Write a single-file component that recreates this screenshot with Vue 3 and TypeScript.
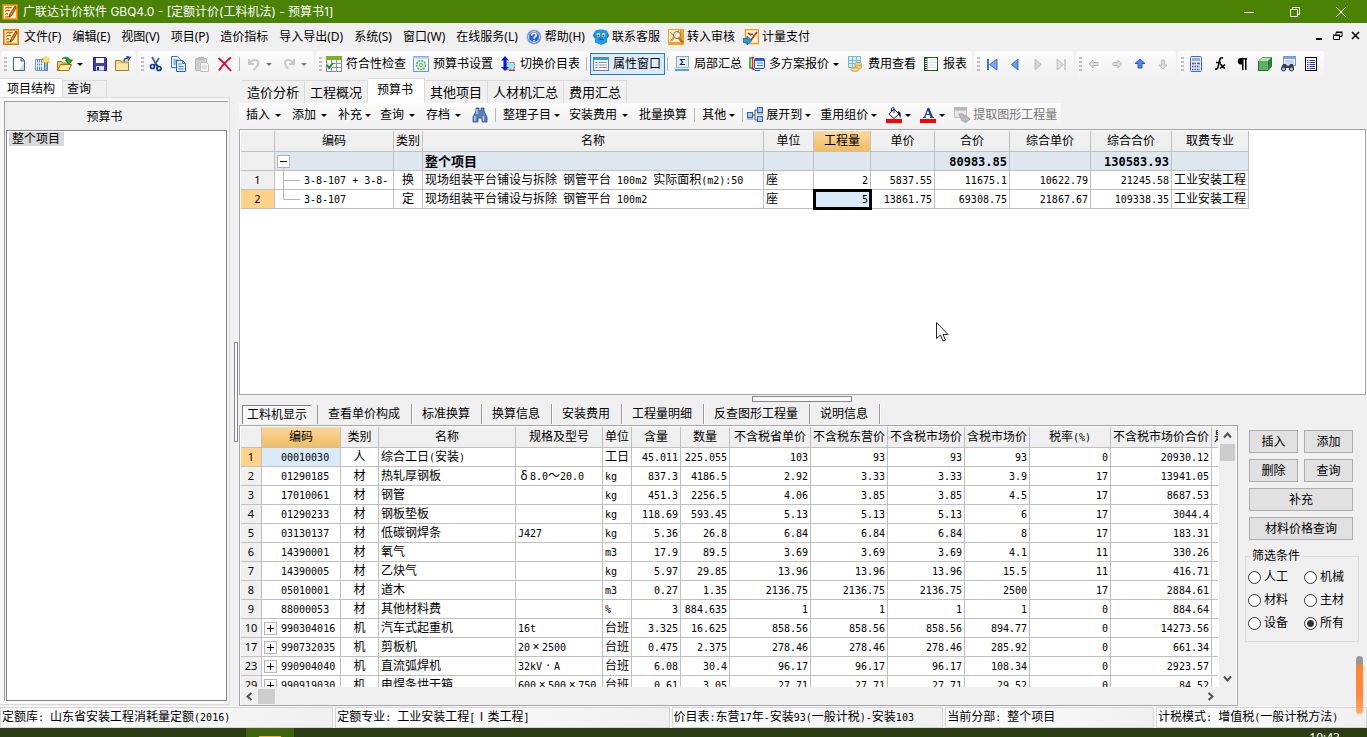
<script setup lang="ts">
import { h, ref } from 'vue'

/* ---------- helpers ---------- */
const runClass = (run: string) => /^[\x20-\x7e]/.test(run) ? 'lat' : /^[×·δ～Ⅰ]$/.test(run) ? 'wide' : ''
const Txt = (props: { t: string }) =>
  h('span', { class: 'txt' }, props.t.split(/([\x20-\x7e]+|[×·δ～Ⅰ])/).filter(Boolean).map((run) =>
    runClass(run) ? h('span', { class: runClass(run) }, run) : run))
Txt.props = ['t']

const shapes: Record<string, string> = {
  logo: '<rect width="16" height="16" fill="#e07a10"/><rect x="1.500" y="1.500" width="13" height="13" fill="#fff3cf" stroke="#f5a623"/><path d="M3 4.500l3-1.500 1 1 3-1M3 7.500l3-1.500 1 1 1-.5M3 10.500l2-1 1 1M3 13c3-.5 4 .5 6-1" stroke="#b5651d" stroke-width="1.200" fill="none"/><path d="M13 2L8 10l-1 3 3-2 4-7z" fill="#e58a1c" stroke="#8a3d05"/>',
  doc: '<path d="M2.500 1.500h8l3 3v10h-11z" fill="#fff" stroke="#44607f"/><path d="M10 1.500v3.500h3.500" fill="#bcd0e8" stroke="#44607f"/><path d="M8 14h5V7z" fill="#c9dcf2"/>',
  build: '<path d="M1.500 3.500h9v11h-9z" fill="#dbe9fa" stroke="#7f97b5"/><path d="M10.500 6h3v8.500h-3z" fill="#8fb4e2" stroke="#557eb5"/><path d="M3.500 4v10M5.500 4v10M7.500 4v10" stroke="#5b87c5"/><path d="M2 7h8M2 10h8" stroke="#fff"/><path d="M12 0l1 2.500 3-.5-2 2 2 2.500-3-.5-1 2-1-2-3 .5 2-2.500-2-2 3 .5z" fill="#ffe26a" stroke="#e5b722" stroke-width=".5"/>',
  open: '<path d="M.5 14.500v-9h4l1 1.500h6v2" fill="#f0d070" stroke="#9a7416"/><path d="M.5 14.500l3-6h11l-3 6z" fill="#fbe9a4" stroke="#9a7416"/><path d="M5 3c3-3 7-2 8 1h2.500L12 8.500 8.500 4H10C9 2 7 2 5 3z" fill="#23a523" stroke="#0b6a0b" stroke-width=".7"/>',
  save: '<path d="M1.500 1.500h12l1 1v12h-13z" fill="#4040a8" stroke="#26267a"/><path d="M4 2h8v5H4z" fill="#f5f5ff"/><path d="M4 10h8v4.500H4z" fill="#dfe3ea"/><path d="M5 11h2v3H5z" fill="#26267a"/>',
  folder: '<path d="M.5 14.500v-10h5l1 1.500h7v8.500z" fill="#f3d481" stroke="#a67d22"/><path d="M1 8h12v6H1z" fill="#fbe7ac"/><path d="M9 5.500c0-3 2-3.500 4-3.500M11.500.5L15 1.500 13 4.500" fill="none" stroke="#24508f" stroke-width="1.500"/>',
  cut: '<path d="M4 1l5 9M11 2L6 10" stroke="#3a5a80" stroke-width="1.600"/><circle cx="4.500" cy="10.500" r="2" fill="none" stroke="#0c3aa0" stroke-width="1.700"/><circle cx="11" cy="12.500" r="2" fill="none" stroke="#0c3aa0" stroke-width="1.700"/><path d="M8 8.500l2 2" stroke="#0c3aa0" stroke-width="2"/>',
  copy: '<path d="M.5.500h6l3 3v8h-9z" fill="#eaf3ff" stroke="#3478cc"/><path d="M2.500 4h4M2.500 6h4M2.500 8h4" stroke="#3478cc"/><path d="M5.500 4.500h6l3 3v8h-9z" fill="#eaf3ff" stroke="#2263b8"/><path d="M11.500 4.500v3h3M7.500 8h3M7.500 10.500h5M7.500 13h5" fill="none" stroke="#3478cc"/>',
  paste: '<rect x="1.500" y="2.500" width="11" height="12" rx="1" fill="#d0d0d0" stroke="#b0b0b0"/><rect x="4" y="1" width="6" height="3" fill="#bcbcbc"/><path d="M6.500 6.500h6l2 2v7h-8z" fill="#f3f3f3" stroke="#bdbdbd"/><path d="M8 10h5M8 12h5" stroke="#c8c8c8"/>',
  del: '<path d="M1.500 2C5 5 10 10 14 15M14 1.500C9 5 5 10 2 14.500" fill="none" stroke="#cf1531" stroke-width="2"/>',
  undo: '<path d="M3 3v5h5M4 7c2-4 8-4 8.500 0 0 3-2 4-5 7" fill="none" stroke="#c9c9c9" stroke-width="2"/>',
  redo: '<path d="M13 3v5H8M12 7C10 3 4 3 4 7c0 3 2 3 3 6" fill="none" stroke="#c9c9c9" stroke-width="2"/>',
  check: '<rect x=".5" y=".5" width="15" height="15" fill="#fff" stroke="#7b8794"/><rect width="16" height="4" fill="#74b51c"/><path d="M5.500 4v12M10.500 4v12M0 7.500h16M0 11.500h16" stroke="#8d99a5"/><path d="M1 7h5v5H1z" fill="#dff3d3"/><path d="M1 9l2 3 4-5" fill="none" stroke="#178a17" stroke-width="1.800"/>',
  gear: '<rect x=".5" y=".5" width="15" height="15" fill="#eef6fb" stroke="#6b9cc4"/><path d="M0 1.500h16" stroke="#a6cbe6" stroke-width="2"/><circle cx="8" cy="9" r="4.500" fill="#d4ecd0" stroke="#5fa869" stroke-width="1.500" stroke-dasharray="2 1"/><circle cx="8" cy="9" r="1.500" fill="#fff" stroke="#5fa869"/>',
  swap: '<rect x="6.500" y="6.500" width="8" height="7" fill="#8eeef2" stroke="#e05070" stroke-dasharray="2 1"/><path d="M5 0l4 4.500H6.500V11H9l-4 4-4-4h2.500V4.500H1z" fill="#1018d8"/><path d="M9 14.500h6" stroke="#c03050"/>',
  prop: '<rect x=".5" y="1.500" width="15" height="13" fill="#f6f8fa" stroke="#69808f"/><path d="M1 3h14" stroke="#2fa5c5" stroke-width="2"/><path d="M2.500 6.500h2M2.500 9h2M2.500 11.500h2" stroke="#3f8b3f"/><path d="M6 6.500h8M6 9h8M6 11.500h8" stroke="#8b97a1"/>',
  sigma: '<rect x="2.500" y=".5" width="12" height="11" fill="#e0f1fb" stroke="#88a9bc"/><path d="M11 3.500H6.500l2 2.500-2 2.500H11" fill="none" stroke="#1d2b3a" stroke-width="1.200"/><path d="M1 14h14" stroke="#5aa9b8" stroke-width="2"/><path d="M0 12h16" stroke="#c2d3da"/>',
  multi: '<path d="M3 2H1v10h2" fill="none" stroke="#1fa52f" stroke-width="1.600"/><path d="M5 1.500H3.500V13H5" fill="none" stroke="#e22" stroke-width="1.400"/><rect x="5.500" y="2.500" width="10" height="10" rx="1" fill="#e4f0ff" stroke="#1e50b8"/><path d="M6 4h9" stroke="#2d66d8" stroke-width="2"/><path d="M8 7h6M8 9.500h6" stroke="#4f83d8"/><path d="M4 12.500l2 2h5" stroke="#1e50b8" fill="none"/>',
  fee: '<rect x=".5" y=".5" width="12" height="11" fill="#d5effa" stroke="#82b8ce"/><path d="M4.500 1v10M8.500 1v10M1 4.500h11M1 7.500h11" stroke="#77bdd8"/><path d="M6.500 8v3c0 2 7 2 7 0V8z" fill="#e9c06c"/><ellipse cx="10" cy="8" rx="3.500" ry="1.500" fill="#f7d98a" stroke="#c9a050"/><ellipse cx="10.500" cy="11" rx="3.500" ry="1.500" fill="#f7d98a" stroke="#c9a050"/><ellipse cx="7" cy="13.500" rx="4" ry="1.800" fill="#f7d98a" stroke="#c9a050"/>',
  report: '<rect x="1.500" y="1.500" width="13" height="13" fill="#fff" stroke="#1c5f1c"/><path d="M3 2v13" stroke="#333" stroke-dasharray="1 1" stroke-width="2"/><path d="M6 4h7M6 6.500h7M6 9h7M6 11.500h7" stroke="#d2d8e0"/><path d="M4.500 2v12" stroke="#bbb"/>',
  first: '<path d="M4 3v11" stroke="#3f6fd0" stroke-width="2"/><path d="M13 3v11L5.500 8.500z" fill="#7ba6f0" stroke="#3f6fd0"/>',
  prev: '<path d="M11 3v11L4.500 8.500z" fill="#6b98ea" stroke="#3f6fd0"/>',
  next: '<path d="M5 3v11l6.500-5.500z" fill="#d4d4d4" stroke="#c2c2c2"/>',
  last: '<path d="M4 3v11l6.500-5.500z" fill="#dedede" stroke="#c2c2c2"/><path d="M12 3v11" stroke="#c2c2c2" stroke-width="1.500"/>',
  aleft: '<path d="M3 8l4-4v2.500h5v3H7V12z" fill="#dcdcdc" stroke="#bdbdbd"/>',
  aright: '<path d="M13 8L9 4v2.500H4v3h5V12z" fill="#dcdcdc" stroke="#bdbdbd"/>',
  aup: '<path d="M8 3l5 4.500h-3V12H6V7.500H3z" fill="#4f86ee" stroke="#2458c0"/>',
  adown: '<path d="M8 13l4-4h-2.500V4h-3v5H4z" fill="#dcdcdc" stroke="#bdbdbd"/>',
  calc: '<rect x="2.500" y=".5" width="11" height="15" rx="1" fill="#dfe9fb" stroke="#4c6fa8"/><rect x="4" y="2" width="8" height="3" fill="#8fb1e6"/><path d="M4 7.500h8M4 10.500h8M4 13.500h8" stroke="#3b62b0" stroke-width="1.500" stroke-dasharray="1.500 1"/><path d="M4 7.500h2M10 7.500h2" stroke="#d33" stroke-width="1.500"/>',
  fx: '<path d="M12 2c-3-1-3 1-4 5s-1 7-4 6M5 6.500h5M9 8.500c2-1 2 4 5 3.500M14 8.500l-5 4" fill="none" stroke="#000" stroke-width="1.600"/>',
  para: '<path d="M13 2H7a3.200 3.200 0 000 6.500h1V14h1.500V3.500H11V14h1.500V3.500H13z" fill="#000"/>',
  cube: '<path d="M1.500 5l4-3.500h9v9L11 14.500H1.500z" fill="#5fae62" stroke="#2b6b31"/><path d="M1.500 5l4-3.500h9L11 5z" fill="#b4e0b2"/><path d="M11 5l3.500-3.500v9L11 14.500z" fill="#2f7f38"/>',
  find: '<rect x="3.500" y=".5" width="12" height="9" fill="#e6efff" stroke="#7c97c4"/><path d="M4 2h11" stroke="#7fa8ea" stroke-width="2"/><path d="M5.500 5h8M5.500 7h8" stroke="#a7b8d3"/><path d="M3 8h3l1 2h2l1-2h3l1 4v2H9v-2H6v2H1v-2z" fill="#34425c"/><circle cx="3.500" cy="13" r="2" fill="#a9c7f3" stroke="#222e44"/><circle cx="11.500" cy="13" r="2" fill="#a9c7f3" stroke="#222e44"/>',
  list: '<rect x="2.500" y="1.500" width="11" height="13" fill="#fff" stroke="#000"/><path d="M4 4.500h1.500M4 6.500h1.500M4 8.500h1.500M4 10.500h1.500M4 12.500h1.500M6.500 4.500H12M6.500 6.500H12M6.500 8.500H12M6.500 10.500H12M6.500 12.500H12" stroke="#2436a8"/>',
  help: '<circle cx="8" cy="8" r="7" fill="#2d66cf" stroke="#9fb6dd"/><circle cx="8" cy="8" r="5.500" fill="none" stroke="#fff" stroke-width=".8"/><path d="M5.800 6.500c0-3 4.400-3 4.400-.2 0 1.700-2.200 1.500-2.200 3.200M8 11v1.500" fill="none" stroke="#fff" stroke-width="1.600"/>',
  service: '<path d="M2 2c2-2 10-2 12 0 2 3 2 6 0 8v3.500L8 16l-6-2.500V10C0 8 0 5 2 2z" fill="#2199e0"/><path d="M1 4l-1 3 2 2zM15 4l1 3-2 2z" fill="#0d6bb5"/><ellipse cx="5.500" cy="6" rx="1.600" ry="2" fill="#fff"/><ellipse cx="10.500" cy="6" rx="1.600" ry="2" fill="#fff"/><circle cx="5.500" cy="6.500" r=".9" fill="#000"/><circle cx="10.500" cy="6.500" r=".9" fill="#000"/><path d="M6 10q2 1.500 4 0" stroke="#0b4a82" fill="none"/>',
  audit: '<rect width="16" height="16" fill="#f1a329"/><path d="M1 1h11v12H1z" fill="#fdeec2"/><path d="M2 3l4 4-4 6M11 1L4 12" stroke="#b88a4b" fill="none"/><circle cx="9" cy="6" r="3.500" fill="#fff9" stroke="#8a6b3a"/><path d="M11 9l4 5" stroke="#d26c0b" stroke-width="2.500"/>',
  pay: '<rect x="2.500" y=".5" width="13" height="14" fill="#fff4d4" stroke="#f39a1e" stroke-width="1.500"/><path d="M14 3L8 11M5 4l3 2M10 5l-3 1" stroke="#b03a10" stroke-width="1.800"/><path d="M0 9.500h4V7l5 4.500L4 16v-2.500H0z" fill="#239be0" stroke="#0b5d94" stroke-width=".7"/>',
  binoc: '<path d="M4 1h3v3h2V1h3v3l3 6v5h-5v-4H6v4H1v-5l3-6z" fill="#5c80ba" stroke="#2f4f85" stroke-width=".8"/><path d="M3 9v5M11.500 9v5M5 2v5" stroke="#c9dcf7" stroke-width="1.200"/>',
  expand: '<path d="M5 8h3M8 3v10M8 3h2M8 13h2" stroke="#37557f" fill="none"/><rect x=".5" y="5.500" width="5" height="5" fill="#a8c8f5" stroke="#37609f"/><rect x="10.500" y=".5" width="5" height="5" fill="#a8c8f5" stroke="#37609f"/><rect x="10.500" y="9.500" width="5" height="5" fill="#a8c8f5" stroke="#37609f"/><path d="M10 7h6M0 12h6" stroke="#6787b5"/>',
  fill: '<path d="M3 7l5-5 5 5-5 4.500z" fill="#fff" stroke="#111a55"/><path d="M8 6V1.500C8 0 5.500 0 5.500 2v3" fill="none" stroke="#111a55"/><path d="M12 4c3 1 3 3 2.500 7L12 7z" fill="#111a55"/><rect y="12" width="16" height="4" fill="#f00"/>',
  color: '<path d="M3 10.500h3M10 10.500h4M4.500 10.500L8 1.500M5.500 7.500h5" fill="none" stroke="#1f3f88" stroke-width="1.200"/><path d="M8 1l4 9.500" stroke="#1f3f88" stroke-width="2.200"/><rect y="12" width="16" height="4" fill="#f00"/>',
  extract: '<rect x=".5" y=".5" width="12" height="10" fill="#e5e5e5" stroke="#c0c0c0"/><path d="M0 2h13" stroke="#b5b5b5" stroke-width="3"/><path d="M5 7h4l2 3V8l5 4-5 4v-2H8z" fill="#bbb" stroke="#a5a5a5"/>',
}
const Icon = (props: { n: string }) =>
  h('svg', { class: 'icon', viewBox: '0 0 16 16', width: 16, height: 16, 'aria-hidden': 'true', innerHTML: shapes[props.n] })
Icon.props = ['n']

/* ---------- data ---------- */
interface Tool { i?: string; t?: string; d?: 0 | 1 | 2; sep?: 1 | 2; on?: boolean; off?: boolean; tip?: string }

const menus: Tool[] = [
  { t: '文件(F)' }, { t: '编辑(E)' }, { t: '视图(V)' }, { t: '项目(P)' }, { t: '造价指标' }, { t: '导入导出(D)' },
  { t: '系统(S)' }, { t: '窗口(W)' }, { t: '在线服务(L)' }, { i: 'help', t: '帮助(H)' }, { i: 'service', t: '联系客服' },
  { i: 'audit', t: '转入审核' }, { i: 'pay', t: '计量支付' },
]
const groups: Tool[][] = [
  [{ i: 'doc', tip: '新建' }, { i: 'build', tip: '新建项目' }, { i: 'open', d: 1, tip: '打开' }, { i: 'save', tip: '保存' }, { i: 'folder', tip: '另存' }],
  [{ i: 'cut', tip: '剪切' }, { i: 'copy', tip: '复制' }, { i: 'paste', tip: '粘贴' }, { i: 'del', tip: '删除' }, { sep: 1 },
    { i: 'undo', d: 1, off: true, tip: '撤销' }, { i: 'redo', d: 1, off: true, tip: '重做' }],
  [{ i: 'check', t: '符合性检查' }, { i: 'gear', t: '预算书设置' }, { i: 'swap', t: '切换价目表' }, { sep: 1 },
    { i: 'prop', t: '属性窗口', on: true }, { sep: 1 }, { i: 'sigma', t: '局部汇总' }, { i: 'multi', t: '多方案报价', d: 1 },
    { i: 'fee', t: '费用查看' }, { i: 'report', t: '报表' }],
  [{ i: 'first', tip: '首项' }, { i: 'prev', tip: '上一项' }, { i: 'next', tip: '下一项' }, { i: 'last', tip: '末项' }],
  [{ i: 'aleft', tip: '左移' }, { i: 'aright', tip: '右移' }, { i: 'aup', tip: '上移' }, { i: 'adown', tip: '下移' }],
  [{ i: 'calc', tip: '计算器' }, { i: 'fx', tip: '函数' }, { i: 'para', tip: '段落' }, { i: 'cube', tip: '图形' }, { i: 'find', tip: '查找' }, { i: 'list', tip: '列表' }],
]
const tools: Tool[] = [
  { t: '插入', d: 2 }, { t: '添加', d: 2 }, { t: '补充', d: 1 }, { t: '查询', d: 2 }, { t: '存档', d: 2 }, { i: 'binoc', tip: '查找' },
  { sep: 1 }, { t: '整理子目', d: 1 }, { t: '安装费用', d: 2 }, { t: '批量换算' }, { sep: 1 }, { t: '其他', d: 1 }, { sep: 2 },
  { i: 'expand', t: '展开到', d: 1 }, { t: '重用组价', d: 1 }, { i: 'fill', d: 1, tip: '填充色' }, { i: 'color', d: 1, tip: '字体色' },
  { i: 'extract', t: '提取图形工程量', off: true },
]
const mainTabs = ['造价分析', '工程概况', '预算书', '其他项目', '人材机汇总', '费用汇总']
const mainTab = ref('预算书')
const subTabs = ['工料机显示', '查看单价构成', '标准换算', '换算信息', '安装费用', '工程量明细', '反查图形工程量', '说明信息']
const subTab = ref('工料机显示')

const topCols = ['编码', '类别', '名称', '单位', '工程量', '单价', '合价', '综合单价', '综合合价', '取费专业']
const topRows = [
  { code: '3-8-107 + 3-8-', v: ['换', '现场组装平台铺设与拆除 钢管平台 100m2 实际面积(m2):50', '座', '2', '5837.55', '11675.1', '10622.79', '21245.58', '工业安装工程'] },
  { code: '3-8-107', v: ['定', '现场组装平台铺设与拆除 钢管平台 100m2', '座', '5', '13861.75', '69308.75', '21867.67', '109338.35', '工业安装工程'] },
]
const topAlign = ['c', 'l', 'l', 'r', 'r', 'r', 'r', 'r', 'l']

const resCols = ['编码', '类别', '名称', '规格及型号', '单位', '含量', '数量', '不含税省单价', '不含税东营价', '不含税市场价', '含税市场价', '税率(%)', '不含税市场价合价', '是']
const resAlign = ['c', 'l', 'l', 'l', 'r', 'r', 'r', 'r', 'r', 'r', 'r', 'r', 'l']
const resRows: string[][] = [
  '1|00010030|人|综合工日(安装)||工日|45.011|225.055|103|93|93|93|0|20930.12',
  '2|01290185|材|热轧厚钢板|δ8.0～20.0|kg|837.3|4186.5|2.92|3.33|3.33|3.9|17|13941.05',
  '3|17010061|材|钢管||kg|451.3|2256.5|4.06|3.85|3.85|4.5|17|8687.53',
  '4|01290233|材|钢板垫板||kg|118.69|593.45|5.13|5.13|5.13|6|17|3044.4',
  '5|03130137|材|低碳钢焊条|J427|kg|5.36|26.8|6.84|6.84|6.84|8|17|183.31',
  '6|14390001|材|氧气||m3|17.9|89.5|3.69|3.69|3.69|4.1|11|330.26',
  '7|14390005|材|乙炔气||kg|5.97|29.85|13.96|13.96|13.96|15.5|11|416.71',
  '8|05010001|材|道木||m3|0.27|1.35|2136.75|2136.75|2136.75|2500|17|2884.61',
  '9|88000053|材|其他材料费||%|3|884.635|1|1|1|1|0|884.64',
  '10|990304016|机|汽车式起重机|16t|台班|3.325|16.625|858.56|858.56|858.56|894.77|0|14273.56',
  '17|990732035|机|剪板机|20×2500|台班|0.475|2.375|278.46|278.46|278.46|285.92|0|661.34',
  '23|990904040|机|直流弧焊机|32kV·A|台班|6.08|30.4|96.17|96.17|96.17|108.34|0|2923.57',
  '29|990919030|机|电焊条烘干箱|600×500×750|台班|0.61|3.05|27.71|27.71|27.71|29.52|0|84.52',
].map((r) => (r + '|').split('|'))

const filters = ['人工', '机械', '材料', '主材', '设备', '所有']
const filter = ref('所有')
const status = ['定额库: 山东省安装工程消耗量定额(2016)', '定额专业: 工业安装工程[Ⅰ类工程]', '价目表:东营17年-安装93(一般计税)-安装103', '当前分部: 整个项目', '计税模式: 增值税(一般计税方法)']
</script>

<template>
  <div class="app">
    <header class="title">
      <Icon n="logo" />
      <h1>广联达计价软件 GBQ4.0 - [定额计价(工料机法) - 预算书1]</h1>
      <div class="winbtns">
        <button aria-label="最小化"><svg width="12" height="12"><path d="M1 6.500h10" stroke="#fff" /></svg></button>
        <button aria-label="还原"><svg width="12" height="12" fill="none" stroke="#fff"><path d="M1.500 3.500h7v7h-7zM3.500 3.500v-2h7v7h-2" /></svg></button>
        <button aria-label="关闭"><svg width="12" height="12" stroke="#fff"><path d="M1 1l10 10M11 1L1 11" /></svg></button>
      </div>
    </header>

    <nav class="menu">
      <Icon n="logo" />
      <button v-for="m in menus" :key="m.t" :class="{ pic: m.i }"><Icon v-if="m.i" :n="m.i" />{{ m.t }}</button>
      <div class="mdi">
        <button aria-label="最小化文档"><svg width="10" height="10"><path d="M1 8h6" stroke="#000" stroke-width="2" /></svg></button>
        <button aria-label="还原文档"><svg width="10" height="10" fill="none" stroke="#000"><path d="M.5 4.500h6v4h-6zM3 4V1.500h6v4H7M3 1h6.500M0 4h7" /></svg></button>
        <button aria-label="关闭文档"><svg width="10" height="10" stroke="#000" stroke-width="1.600"><path d="M1 1l7 7M8 1L1 8" /></svg></button>
      </div>
    </nav>

    <div class="bars">
      <div v-for="(g, gi) in groups" :key="gi" class="group">
        <i class="grip"></i>
        <template v-for="(b, bi) in g" :key="bi">
          <i v-if="b.sep" class="sep"></i>
          <button v-else class="tool" :class="{ on: b.on, off: b.off }" :aria-label="b.tip">
            <Icon v-if="b.i" :n="b.i" /><span v-if="b.t">{{ b.t }}</span><i v-if="b.d" class="arr"></i>
          </button>
        </template>
      </div>
    </div>

    <div class="body">
      <aside class="side">
        <div class="sidetabs"><button class="cur">项目结构</button><button>查询</button></div>
        <div class="sidepage">
          <div class="sidebox">
            <h2>预算书</h2>
            <ul class="tree"><li>整个项目</li></ul>
          </div>
        </div>
      </aside>
      <div class="vsplit"><i></i></div>

      <main class="main">
        <div class="maintabs">
          <button v-for="t in mainTabs" :key="t" :class="{ cur: t === mainTab }" @click="mainTab = t">{{ t }}</button>
        </div>
        <div class="subbar">
          <template v-for="(b, bi) in tools" :key="bi">
            <i v-if="b.sep" class="sep" :class="{ tight: b.sep === 2 }"></i>
            <button v-else class="tool" :class="{ off: b.off }" :aria-label="b.tip">
              <Icon v-if="b.i" :n="b.i" /><span v-if="b.t">{{ b.t }}</span><i v-if="b.d" class="arr" :class="{ long: b.d === 2 }"></i>
            </button>
          </template>
        </div>

        <section class="pane top">
          <table class="grid budget">
            <colgroup><col v-for="n in 11" :key="n" :class="'b' + n"></colgroup>
            <thead>
              <tr><th></th><th v-for="c in topCols" :key="c" :class="{ hot: c === '工程量' }">{{ c }}</th></tr>
            </thead>
            <tbody>
              <tr class="sum">
                <th></th>
                <td><div class="code"><svg class="branch" width="18" height="19"><rect x="2.500" y="3.500" width="12" height="12" fill="#fff" stroke="#b5b5b5" /><path d="M5 9.500h7" stroke="#000" /><path d="M8.500 16v3" stroke="#b5b5b5" /></svg></div></td>
                <td></td><td><Txt t="整个项目" /></td><td></td><td></td><td></td>
                <td class="r"><Txt t="80983.85" /></td><td></td><td class="r"><Txt t="130583.93" /></td><td></td>
              </tr>
              <tr v-for="(r, i) in topRows" :key="i">
                <th class="num" :class="{ hotnum: i === 1 }">{{ i + 1 }}</th>
                <td><div class="code"><svg class="branch" width="29" height="18"><path :d="i ? 'M8.500 0v9.500h17' : 'M8.500 0v18M8.500 9.500h17'" fill="none" stroke="#b5b5b5" /></svg><Txt :t="r.code" /></div></td>
                <td v-for="(v, j) in r.v" :key="j" :class="[topAlign[j], { sel: i === 1 && j === 3 }]"><Txt :t="v" /></td>
              </tr>
            </tbody>
          </table>
        </section>

        <div class="hsplit"><i></i></div>

        <div class="subtabs">
          <button v-for="t in subTabs" :key="t" :class="{ cur: t === subTab }" @click="subTab = t">{{ t }}</button>
        </div>

        <div class="lower">
          <section class="pane bottom">
            <div class="view">
              <table class="grid res">
                <colgroup><col v-for="n in 15" :key="n" :class="'r' + n"></colgroup>
                <thead>
                  <tr><th></th><th v-for="(c, i) in resCols" :key="c" :class="{ hot: i === 0 }"><Txt :t="c" /></th></tr>
                </thead>
                <tbody>
                  <tr v-for="(r, i) in resRows" :key="r[0]">
                    <th class="num" :class="{ hotnum: i === 0 }">{{ r[0] }}</th>
                    <td :class="{ pick: i === 0 }">
                      <div class="code res-code">
                        <button v-if="r[2] === '机'" class="plus" aria-label="展开"><svg width="11" height="11"><path d="M2 5.500h7M5.500 2v7" stroke="#000" /></svg></button>
                        <i v-else class="noplus"></i>
                        <Txt :t="r[1]" />
                      </div>
                    </td>
                    <td v-for="(v, j) in r.slice(2)" :key="j" :class="resAlign[j]"><Txt :t="v" /></td>
                  </tr>
                </tbody>
              </table>
            </div>
            <div class="vbar">
              <button aria-label="向上"><svg width="9" height="7"><path d="M1 5.500l3.500-4 3.500 4" fill="none" stroke="#505050" stroke-width="2" /></svg></button>
              <i class="vthumb"></i>
              <button class="end" aria-label="向下"><svg width="9" height="7"><path d="M1 1.500l3.500 4 3.500-4" fill="none" stroke="#505050" stroke-width="2" /></svg></button>
            </div>
            <div class="hbar">
              <button aria-label="向左"><svg width="7" height="9"><path d="M5.500 1l-4 3.500 4 3.500" fill="none" stroke="#505050" stroke-width="2" /></svg></button>
              <i class="hthumb"></i>
              <button class="end" aria-label="向右"><svg width="7" height="9"><path d="M1.500 1l4 3.500-4 3.500" fill="none" stroke="#505050" stroke-width="2" /></svg></button>
            </div>
          </section>

          <div class="actions">
            <div class="btns">
              <button>插入</button><button>添加</button><button>删除</button><button>查询</button>
              <button class="full">补充</button><button class="full">材料价格查询</button>
            </div>
            <fieldset>
              <legend>筛选条件</legend>
              <label v-for="f in filters" :key="f"><input v-model="filter" type="radio" name="filter" :value="f">{{ f }}</label>
            </fieldset>
          </div>
        </div>
      </main>
    </div>

    <footer class="status"><div v-for="s in status" :key="s"><Txt :t="s" /></div></footer>
    <div class="taskbar"><i class="task"><i></i></i><time>10:43</time></div>

    <i class="floatbar"></i>
    <svg class="cursor" width="13" height="20" viewBox="0 0 13 20"><path d="M.5.500v16l4-3.500 2.500 6 2.500-1-2.500-5.500h5z" fill="#fff" stroke="#222" /></svg>
  </div>
</template>

<style>
html, body { margin: 0; overflow: hidden; }
</style>

<style scoped>
.app {
  position: relative; display: flex; flex-direction: column; height: 100vh; overflow: hidden;
  background: #f0f0f0; color: #000;
  font: 12px/16px "Noto Sans", "Noto Sans CJK SC", sans-serif;
}
button { font: inherit; color: inherit; background: none; border: 0; padding: 0; margin: 0; white-space: nowrap; }
.app :deep(.icon) { display: block; flex: none; }
.app :deep(.txt) { white-space: pre; }
.app :deep(.lat) { font-family: "DejaVu Sans Mono", monospace; font-size: 10px; }
.app :deep(.wide) { display: inline-block; width: 12px; text-align: center; line-height: 14px; }

.title { display: flex; align-items: center; height: 23px; padding-left: 2px; background: #498205; color: #fff; gap: 5px; flex: none; }
.title h1 { margin: 0; font: 400 12px/16px "DejaVu Sans", "Noto Sans CJK SC", sans-serif; font-family: Inter, "Noto Sans CJK SC", sans-serif; flex: 1; white-space: nowrap; }
.winbtns { display: flex; padding-right: 3px; }
.winbtns button { width: 46px; height: 20px; display: grid; place-items: center; }

.menu { display: flex; align-items: center; height: 28px; padding-left: 3px; gap: 11px; flex: none; }
.menu > .icon { margin-right: -6px; }
.menu > button { display: flex; align-items: center; gap: 3px; }
.menu > .pic { margin-left: -3px; }
.mdi { margin-left: auto; display: flex; gap: 8px; padding-right: 6px; }

.bars { display: flex; gap: 2px; padding-left: 1px; flex: none; height: 26px; }
.group { display: flex; align-items: center; padding-right: 1px; background: linear-gradient(#fcfcfc, #f1f1f1); border-radius: 3px; }
.grip { width: 3px; height: 14px; margin: 0 1px 0 3px; background: repeating-linear-gradient(#bdbdbd 0 2px, transparent 2px 4px); }
.tool { display: flex; align-items: center; height: 22px; padding: 0 4px 0 3px; gap: 4px; }
.tool .arr { margin: 0 -1px 0 -3px; }
.tool.off { color: #777; }
.tool.on { background: #dcebf8; box-shadow: inset 0 0 0 1px #1a7fd4; }
.arr { display: grid; place-items: center; width: 12px; height: 8px; }
.arr::after { content: ""; border: 3px solid transparent; border-top-color: currentColor; border-bottom: 0; }
.sep { width: 1px; height: 14px; margin: 0 3px 0 2px; background: #b8b8b8; }

.body { display: flex; flex: 1; min-height: 0; padding-top: 1px; }
.side { display: flex; flex-direction: column; width: 230px; flex: none; padding-bottom: 1px; }
.sidetabs { display: flex; align-items: flex-end; height: 19px; }
.sidetabs button { height: 17px; padding: 0 15px 0 4px; border: 1px solid #dcdcdc; border-width: 1px 1px 0 0; }
.sidetabs .cur { height: 20px; padding: 0 7px; background: #fff; margin-bottom: -1px; }
.sidepage { flex: 1; display: flex; padding: 3px 1px 3px 4px; border: 1px solid #dadada; border-left: 0; background: #f8f8f8; }
.sidebox { flex: 1; display: flex; flex-direction: column; background: #f0f0f0; border: 1px solid #a0a0a0; border-width: 1px 0 0 1px; padding: 0 1px; }
.sidebox h2 { margin: 0; height: 28px; line-height: 29px; padding-right: 24px; font-size: 12px; font-weight: 400; text-align: center; }
.tree { flex: 1; margin: 0; padding: 1px 2px; list-style: none; background: #fff; border: 1px solid #828790; }
.tree li { display: table; padding: 0 4px 0 3px; line-height: 14px; background: #d9d9d9; }

.vsplit { display: flex; align-items: center; width: 9px; flex: none; }
.vsplit i { width: 2px; height: 98px; margin-left: 4px; border: 1px solid #888; background: #f8f8f8; }

.main { flex: 1; min-width: 0; display: flex; flex-direction: column; }
.maintabs { display: flex; align-items: flex-end; height: 25px; padding-left: 3px; flex: none; }
.maintabs button { height: 23px; padding: 0 5px; border: 1px solid #dadada; border-width: 1px 1px 0 0; font-size: 13px; }
.maintabs .cur { height: 25px; padding: 0 11px 2px 9px; background: #fff; font-size: 12px; }
.subbar { display: flex; align-items: center; align-self: flex-start; height: 24px; padding: 0 1px 0 4px; background: linear-gradient(#fcfcfc, #f1f1f1); flex: none; }
.subbar .tool { padding: 0 3px; gap: 3px; }
.subbar .arr { margin: 0 0 0 -3px; }
.subbar .arr.long { width: 16px; }
.subbar .sep { margin: 0 4px; }
.subbar .sep.tight { margin: 0 1px; }

.pane { background: #fff; border: 1px solid #a5a5ac; }
.top { flex: 0 0 266px; margin: 2px 1px 0 0; padding: 1px 0 0 1px; box-sizing: border-box; overflow: hidden; }

.grid { table-layout: fixed; border-spacing: 0; width: 0; line-height: 16px; }
.grid th, .grid td { box-sizing: border-box; height: 19px; padding: 0 2px; border: 1px solid #c0c0c0; border-width: 0 1px 1px 0; font-weight: 400; text-align: left; overflow: hidden; white-space: nowrap; }
.grid th { background: #f0f0f0; text-align: center; padding: 0; }
.grid thead th { height: 21px; }
.grid thead th.hot { background: linear-gradient(#fad8a2, #f0bd60); }
.grid .num { font-size: 11px; }
.grid .num.hotnum { background: #ffd28a; }
.grid td.r { text-align: right; }
.grid td.c { text-align: center; }
.grid .sum td { background: #dee6f0; font-weight: 700; font-size: 13px; }
.grid .sum td :deep(.lat) { font-size: 12px; }
.grid td.pick { background: #d9eaf9; }
.grid td.sel { background: #d9eaf9; outline: 3px solid #000; outline-offset: -2px; position: relative; }
.grid .code { display: flex; align-items: center; height: 18px; margin: 0 2px 0 -2px; overflow: hidden; }
.branch { display: block; flex: none; }
.budget .b1 { width: 34px; } .budget .b2 { width: 119px; } .budget .b3 { width: 29px; } .budget .b4 { width: 341px; }
.budget .b5 { width: 50px; } .budget .b6 { width: 57px; } .budget .b7 { width: 64px; } .budget .b8 { width: 75px; }
.budget .b9 { width: 81px; } .budget .b10 { width: 81px; } .budget .b11 { width: 77px; }

.res .r1 { width: 21px; } .res .r2 { width: 79px; } .res .r3 { width: 38px; } .res .r4 { width: 137px; }
.res .r5 { width: 87px; } .res .r6 { width: 29px; } .res .r7, .res .r8 { width: 49px; } .res .r9 { width: 81px; }
.res .r10, .res .r11 { width: 77px; } .res .r12 { width: 65px; } .res .r13 { width: 81px; }
.res .r14 { width: 101px; } .res .r15 { width: 60px; }
.res .res-code { padding-left: 2px; gap: 4px; }
.res thead th:nth-last-child(-n + 2) { text-align: left; padding-left: 2px; }
.plus { display: grid; place-items: center; width: 13px; height: 13px; border: 1px solid #b5b5b5; background: #fff; flex: none; }
.noplus { width: 13px; flex: none; }

.hsplit { display: flex; justify-content: center; height: 8px; padding-right: 3px; flex: none; }
.hsplit i { width: 98px; height: 4px; margin-top: 1px; border: 1px solid #888; background: #f8f8f8; }

.subtabs { display: flex; align-items: center; height: 22px; padding: 0 0 0 3px; flex: none; }
.subtabs button { height: 20px; padding: 0 11px 0 10px; border-right: 1px solid #999; box-shadow: 1px 0 #fff; }
.subtabs .cur { height: 19px; padding: 0 4px; margin-right: 7px; border: 1px solid #808080; border-width: 1px 0 0 1px; background: #f8f8f8; box-shadow: 6px 0 #f0f0f0, 7px 0 #999; }

.lower { flex: 1; display: flex; min-height: 0; }
.bottom { flex: 1; min-width: 0; display: grid; grid-template: minmax(0, 1fr) 18px / minmax(0, 1fr) 17px; padding: 1px 1px 0; box-sizing: border-box; }
.view { overflow: hidden; margin-right: 1px; }
.vbar, .hbar { display: flex; align-items: center; background: #f0f0f0; }
.vbar { flex-direction: column; }
.hbar { grid-column: 1 / -1; }
.vbar button, .hbar button { display: grid; place-items: center; width: 17px; height: 17px; flex: none; }
.vthumb { width: 15px; height: 17px; background: #cdcdcd; }
.hthumb { width: 17px; height: 15px; background: #cdcdcd; }
.vbar .end { margin-top: auto; }
.hbar .end { margin: 0 17px 0 auto; }

.actions { width: 129px; flex: none; padding: 5px 8px 0 7px; box-sizing: border-box; }
.btns { display: grid; grid-template-columns: 49px 49px; gap: 6px; margin: 0 0 8px 4px; }
.btns button { height: 23px; background: #e1e1e1; border: 1px solid #adadad; }
.btns .full { grid-column: 1 / -1; }
fieldset { display: grid; grid-template-columns: 56px 50px; row-gap: 7px; margin: 0; padding: 5px 0 10px 2px; border: 1px solid #dcdcdc; min-width: 0; }
legend { margin: -4px 0 0 2px; padding: 0 2px; }
label { display: flex; align-items: center; gap: 3px; height: 16px; white-space: nowrap; }
input { appearance: none; width: 13px; height: 13px; margin: 0; border: 1px solid #333; border-radius: 50%; background: #fff; flex: none; }
input:checked { background: radial-gradient(circle, #333 0 3px, #fff 4px); }

.status { display: grid; grid-template-columns: 335fr 336fr 273fr 210fr 212fr; gap: 2px; height: 22px; padding-top: 1px; box-sizing: border-box; flex: none; background: #f8f8f8; }
.status div { border: 1px solid #d5d5d5; padding-left: 1px; line-height: 18px; background: linear-gradient(90deg, #fff, #f0f0f0); overflow: hidden; white-space: nowrap; }
.taskbar { display: flex; height: 9px; padding: 0 27px 0 246px; justify-content: space-between; background: #2c3c15; color: #fff; overflow: hidden; flex: none; }
.task { display: flex; justify-content: center; align-items: flex-end; width: 48px; height: 9px; background: #3d640c; }
.task i { width: 22px; height: 1px; background: #ffa63a; }
.taskbar time { padding-top: 2px; }

.floatbar { position: absolute; right: 4px; bottom: 23px; width: 7px; height: 58px; border-radius: 4px; background: linear-gradient(#999 0 8px, #ff8534 9px, #ff8a3c 70%, #ffae70); }
.cursor { position: absolute; left: 936px; top: 322px; }
</style>
